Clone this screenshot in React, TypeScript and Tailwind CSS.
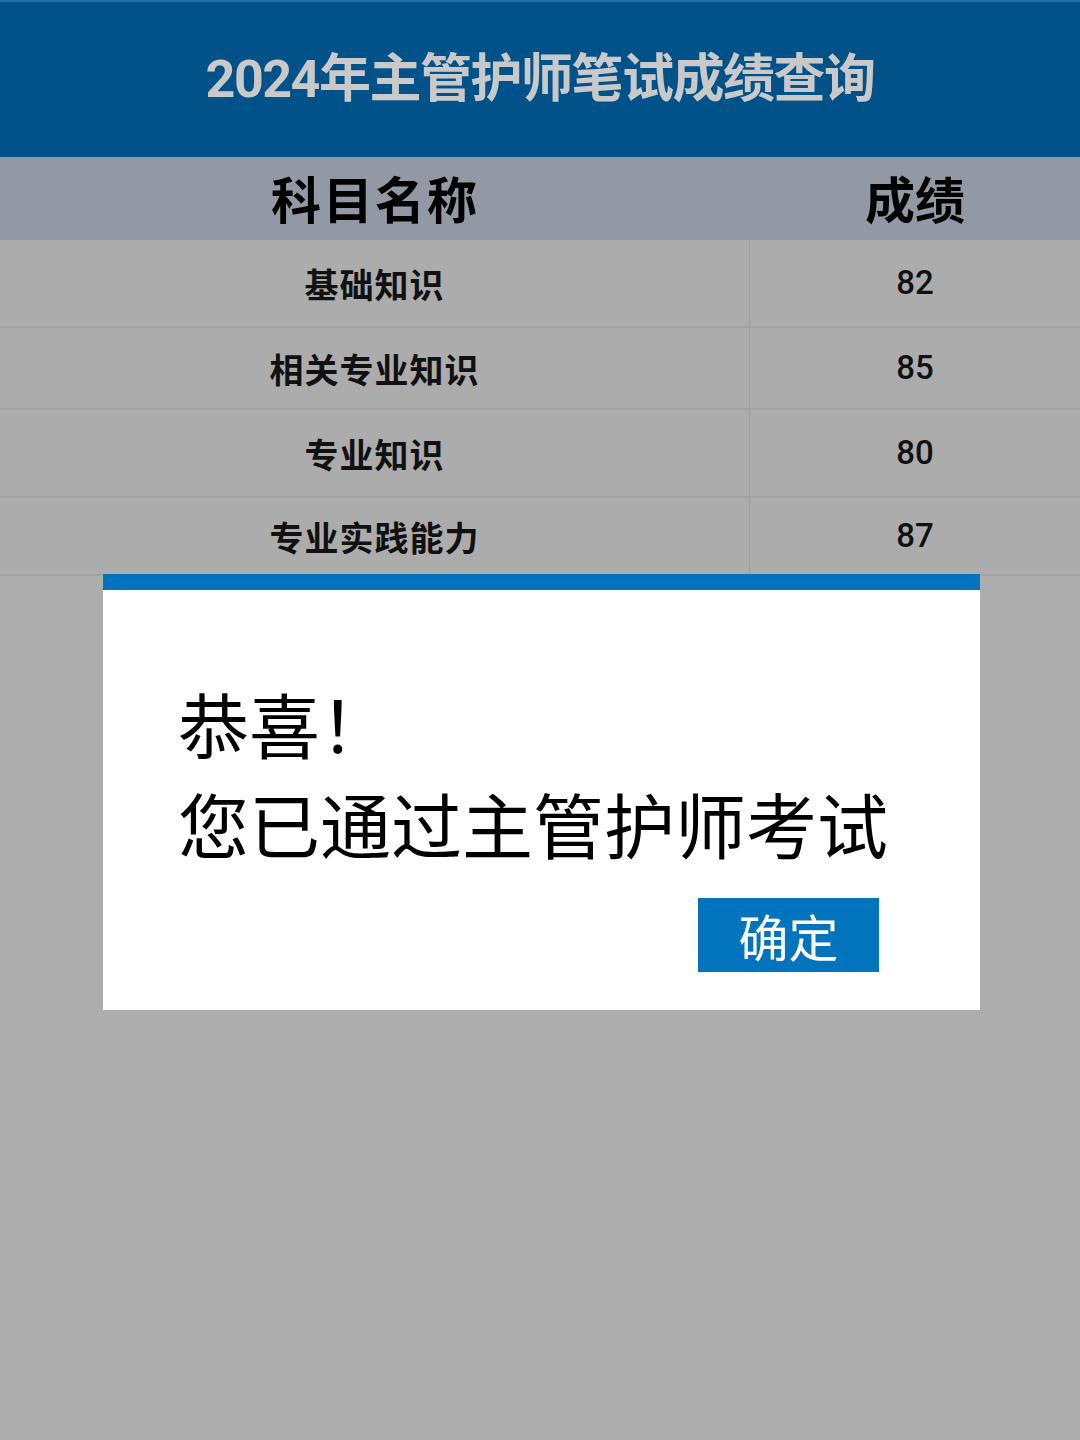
import React from "react";

type Row = {
    name: string;
    score: number;
};

const rows: Row[] = [
    { name: "基础知识", score: 82 },
    { name: "相关专业知识", score: 85 },
    { name: "专业知识", score: 80 },
    { name: "专业实践能力", score: 87 },
];

const rowHeights = ["h-[88px]", "h-[82px]", "h-[88px]", "h-[78px]"];

const cjk = { fontFamily: '"Noto Sans CJK SC", "Noto Sans", sans-serif' };
const num = { fontFamily: 'Roboto, "Noto Sans CJK SC", sans-serif' };

export default function App() {
    return (
        <div className="w-[1080px] h-[1440px] bg-[#adadad] flex flex-col overflow-hidden" style={cjk}>
            <div className="h-[157px] bg-[#02528a] border-t-2 border-[#1f6fae] flex items-center justify-center">
                <h1 className="text-[52px] font-bold text-[#c9c9c9] tracking-[-1.5px] leading-none -mt-[4px]" style={cjk}>
                    <span style={num}>2024</span>年主管护师笔试成绩查询
                </h1>
            </div>
            <div className="h-[83px] bg-[#9199a5] flex items-center">
                <div className="w-[750px] text-center text-[50px] font-bold text-black tracking-[2px] leading-none -mt-[4px]">
                    科目名称
                </div>
                <div className="flex-1 text-center text-[50px] font-bold text-black leading-none -mt-[4px]">
                    成绩
                </div>
            </div>
            <div className="flex flex-col">
                {rows.map((row, i) => (
                    <div
                        key={row.name}
                        className={`${rowHeights[i]} flex border-b-2 border-[#a2a2a2] bg-[#acacac]`}
                    >
                        <div className="w-[750px] border-r border-[#a0a0a0] flex items-center justify-center text-[34px] font-semibold text-[#111] tracking-[1px]">
                            {row.name}
                        </div>
                        <div className="flex-1 flex items-center justify-center text-[33px] font-medium text-[#111]" style={num}>
                            {row.score}
                        </div>
                    </div>
                ))}
            </div>
            <div className="ml-[103px] w-[877px] -mt-[2px] bg-white flex flex-col">
                <div className="h-[16px] bg-[#0273bd]" />
                <div className="pl-[75px] pt-[82px] text-[71px] leading-[100px] text-black">
                    <div>恭喜！</div>
                    <div>您已通过主管护师考试</div>
                </div>
                <div className="flex justify-end pr-[101px] pt-[26px] pb-[38px]">
                    <button className="w-[181px] h-[74px] bg-[#0273bd] text-white text-[50px] leading-none flex items-center justify-center">
                        确定
                    </button>
                </div>
            </div>
        </div>
    );
}
